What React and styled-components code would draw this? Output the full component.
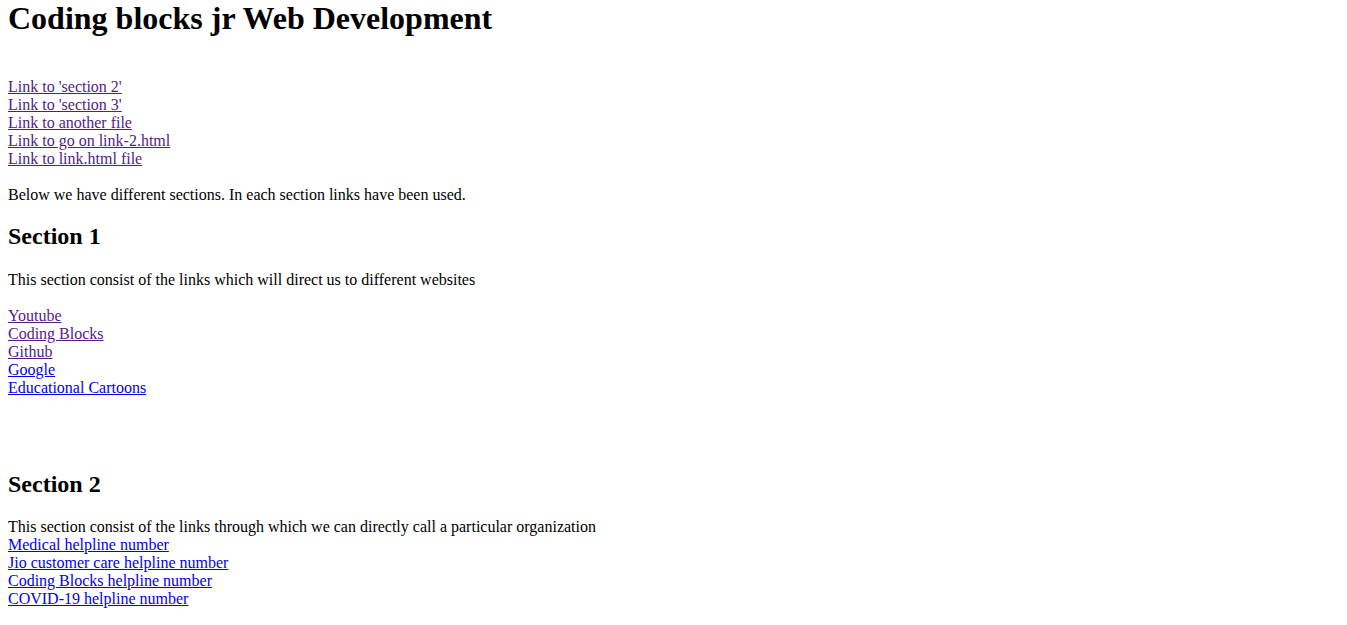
import React from "react";
import styled, { createGlobalStyle } from "styled-components";

const Global = createGlobalStyle`
  html, body { margin: 0; padding: 0; background: #fff; }
  body {
    font-family: "Liberation Serif", "Times New Roman", serif;
    font-size: 16px;
    color: #000;
  }
`;

const Page = styled.main`
  display: flex;
  flex-direction: column;
  align-items: flex-start;
  padding: 0 8px;
`;

const Title = styled.h1`
  margin: 0;
  font-size: 32px;
  line-height: 37px;
  font-weight: bold;
`;

const SectionTitle = styled.h2`
  margin: ${(p) => p.$top}px 0 0;
  font-size: 24px;
  line-height: 28px;
  font-weight: bold;
`;

const Text = styled.p`
  margin: ${(p) => p.$top}px 0 0;
  line-height: 18px;
`;

const LinkList = styled.nav`
  display: flex;
  flex-direction: column;
  align-items: flex-start;
  margin-top: ${(p) => p.$top}px;
`;

const Link = styled.a`
  display: block;
  line-height: 18px;
  color: ${(p) => (p.$visited ? "#551a8b" : "#0000ee")};
  text-decoration: underline;
  cursor: pointer;
`;

const topLinks = [
  "Link to 'section 2'",
  "Link to 'section 3'",
  "Link to another file",
  "Link to go on link-2.html",
  "Link to link.html file",
];

const siteLinks = [
  { t: "Youtube", v: true },
  { t: "Coding Blocks", v: true },
  { t: "Github", v: true },
  { t: "Google", v: false },
  { t: "Educational Cartoons", v: false },
];

const callLinks = [
  "Medical helpline number",
  "Jio customer care helpline number",
  "Coding Blocks helpline number",
  "COVID-19 helpline number",
];

export default function App() {
  return (
    <>
      <Global />
      <Page>
        <Title>Coding blocks jr Web Development</Title>
        <LinkList $top={41}>
          {topLinks.map((t) => (
            <Link key={t} $visited>
              {t}
            </Link>
          ))}
        </LinkList>
        <Text $top={18}>
          Below we have different sections. In each section links have been used.
        </Text>
        <SectionTitle $top={18}>Section 1</SectionTitle>
        <Text $top={21}>
          This section consist of the links which will direct us to different websites
        </Text>
        <LinkList $top={18}>
          {siteLinks.map((l) => (
            <Link key={l.t} $visited={l.v}>
              {l.t}
            </Link>
          ))}
        </LinkList>
        <SectionTitle $top={73}>Section 2</SectionTitle>
        <Text $top={20}>
          This section consist of the links through which we can directly call a particular organization
        </Text>
        <LinkList $top={0}>
          {callLinks.map((t) => (
            <Link key={t}>{t}</Link>
          ))}
        </LinkList>
      </Page>
    </>
  );
}
